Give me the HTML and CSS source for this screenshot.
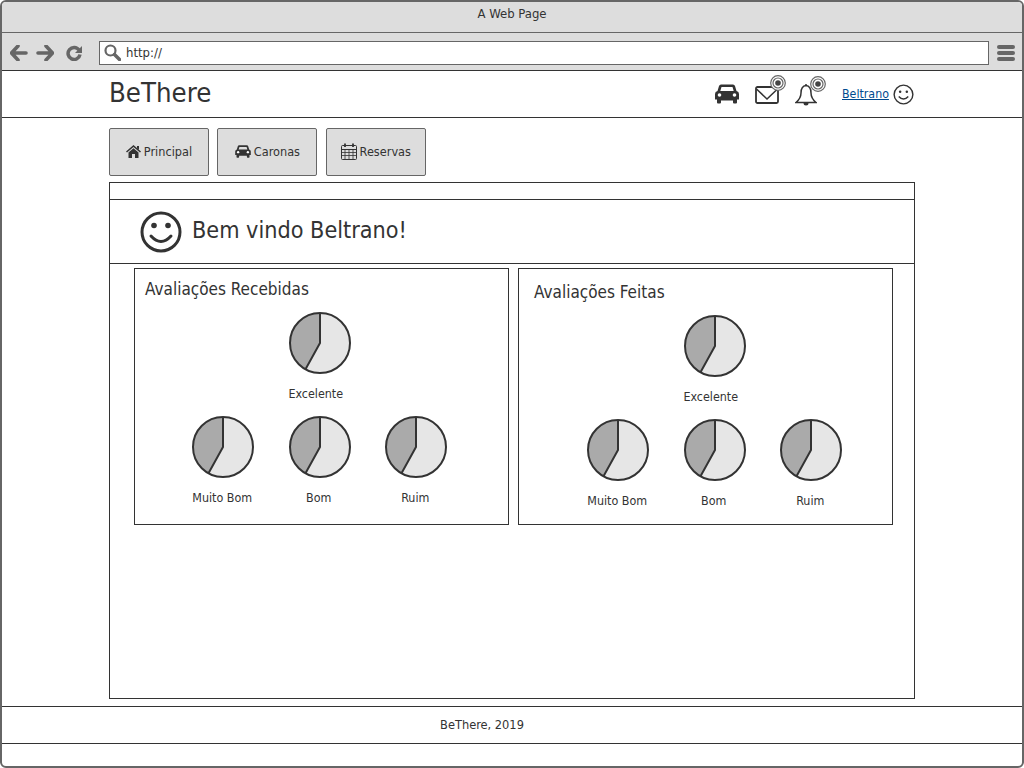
FILE: index.html
```html
<!DOCTYPE html>
<html lang="en">
<head>
    <meta charset="UTF-8">
    <title>BeThere</title>
    <link rel="stylesheet" href="styles.css">
</head>
<body>
    <svg class="defs" width="0" height="0">
        <symbol id="pie" viewBox="0 0 64 64">
            <circle cx="32" cy="32" r="30" fill="#e6e6e6"/>
            <path d="M32 2 V32 L17.500 58.200 A30 30 0 0 1 32 2 Z" fill="#aaa"/>
            <circle cx="32" cy="32" r="30" fill="none" stroke="#333" stroke-width="2"/>
            <path d="M32 2 V32 L17.500 58.200" fill="none" stroke="#333" stroke-width="2"/>
        </symbol>
        <symbol id="car" viewBox="0 0 24 20">
            <path d="M6 0.500 H18 Q19.500 0.500 20 2 L21.500 7 Q24 7.500 24 10 V15.500 H22 V18.500 Q22 19.500 21 19.500 H19 Q18 19.500 18 18.500 V16.500 H6 V18.500 Q6 19.500 5 19.500 H3 Q2 19.500 2 18.500 V15.500 H0 V10 Q0 7.500 2.500 7 L4 2 Q4.500 0.500 6 0.500 Z M6.500 3 L5.300 7 H18.700 L17.500 3 Z" fill="#333" fill-rule="evenodd"/>
            <circle cx="4.500" cy="11" r="1.800" fill="#fff"/>
            <circle cx="19.500" cy="11" r="1.800" fill="#fff"/>
        </symbol>
        <symbol id="signal" viewBox="0 0 16 16">
            <circle cx="8" cy="8" r="7.300" fill="#fff" stroke="#666" stroke-width="1.200"/>
            <circle cx="8" cy="8" r="5" fill="none" stroke="#666" stroke-width="1.200"/>
            <circle cx="8" cy="8" r="2.800" fill="#444"/>
        </symbol>
    </svg>

    <div class="window">
        <div class="titlebar">A Web Page</div>
        <div class="toolbar">
            <svg class="tool-icon" width="18" height="16" viewBox="0 0 18 16"><path d="M8 1 L1.500 8 L8 15 M2.500 8 H16" fill="none" stroke="#666" stroke-width="3.600" stroke-linejoin="round" stroke-linecap="round"/></svg>
            <svg class="tool-icon" width="18" height="16" viewBox="0 0 18 16"><path d="M10 1 L16.500 8 L10 15 M15.500 8 H2" fill="none" stroke="#666" stroke-width="3.600" stroke-linejoin="round" stroke-linecap="round"/></svg>
            <svg class="tool-icon reload" width="16" height="16" viewBox="0 0 16 16"><path d="M13 5 A6 6 0 1 0 14 9.500" fill="none" stroke="#666" stroke-width="3.500"/><path d="M16 1 V8 H9 Z" fill="#666"/></svg>
            <div class="address">
                <svg width="17" height="17" viewBox="0 0 17 17"><circle cx="6.500" cy="6.500" r="5" fill="none" stroke="#666" stroke-width="2.200"/><path d="M10.500 10.500 L15.500 15.500" stroke="#666" stroke-width="3.500" stroke-linecap="round"/></svg>
                <span>http://</span>
            </div>
            <div class="menu-icon"><i></i><i></i><i></i></div>
        </div>

        <header class="site-header">
            <div class="brand">BeThere</div>
            <div class="header-icons">
                <svg class="icon-car" width="24" height="20"><use href="#car"/></svg>
                <div class="notify notify-mail">
                    <svg width="24" height="18" viewBox="0 0 24 18"><rect x="1" y="1" width="22" height="16" rx="1.500" fill="#fff" stroke="#333" stroke-width="1.800"/><path d="M1.500 3 L12 13 L22.500 3" fill="none" stroke="#333" stroke-width="1.500"/></svg>
                    <svg class="signal" width="16" height="16"><use href="#signal"/></svg>
                </div>
                <div class="notify notify-bell">
                    <svg width="22" height="23" viewBox="0 0 22 23"><path d="M11 2.500 C6.500 3 6 6.500 6 10 C6 14 4.500 16.500 1 19.500 H21 C17.500 16.500 16 14 16 10 C16 6.500 15.500 3 11 2.500 Z" fill="#fff" stroke="#333" stroke-width="1.500"/><circle cx="11" cy="2" r="1" fill="#333"/><path d="M8.500 20 A2.500 2.500 0 0 0 13.500 20 Z" fill="#333"/></svg>
                    <svg class="signal" width="16" height="16"><use href="#signal"/></svg>
                </div>
            </div>
            <a class="user-link" href="#">Beltrano</a>
            <svg class="smile-small" width="21" height="21" viewBox="0 0 22 22"><circle cx="11" cy="11" r="9.800" fill="none" stroke="#333" stroke-width="1.500"/><circle cx="7.500" cy="8" r="1.300" fill="#333"/><circle cx="14.500" cy="8" r="1.300" fill="#333"/><path d="M6 13 Q11 18.500 16 13" fill="none" stroke="#333" stroke-width="1.500"/></svg>
        </header>

        <main class="page">
            <nav class="tabs">
                <a class="tab" href="#">
                    <svg width="15" height="13" viewBox="0 0 15 13"><path d="M7.500 0 L15 6.500 L14 7.500 L7.500 2 L1 7.500 L0 6.500 Z M11 1 H13 V4.500 L11 3 Z M2.500 7.500 L7.500 3.200 L12.500 7.500 V13 H9 V9 H6 V13 H2.500 Z" fill="#333"/></svg>
                    Principal
                </a>
                <a class="tab" href="#">
                    <svg width="16" height="13"><use href="#car"/></svg>
                    Caronas
                </a>
                <a class="tab" href="#">
                    <svg width="16" height="17" viewBox="0 0 16 17"><rect x="0.500" y="2.500" width="15" height="14" rx="1" fill="none" stroke="#333" stroke-width="1"/><path d="M4 0.500 V4 M12 0.500 V4" stroke="#333" stroke-width="1.800"/><path d="M1 6.500 H15" stroke="#333" stroke-width="1.200"/><path d="M1 9.500 H15 M1 12.500 H15 M4 6 V16 M8 6 V16 M12 6 V16" stroke="#333" stroke-width="0.800"/></svg>
                    Reservas
                </a>
            </nav>

            <section class="content">
                <div class="content-top"></div>
                <div class="welcome">
                    <svg width="42" height="42" viewBox="0 0 42 42"><circle cx="21" cy="21" r="19" fill="none" stroke="#333" stroke-width="3"/><circle cx="14" cy="14.500" r="2.800" fill="#333"/><circle cx="28" cy="14.500" r="2.800" fill="#333"/><path d="M11 25 Q21 36 31 25" fill="none" stroke="#333" stroke-width="3" stroke-linecap="round"/></svg>
                    <h1>Bem vindo Beltrano!</h1>
                </div>
                <div class="panels">
                    <div class="panel panel-left">
                        <h2>Avaliações Recebidas</h2>
                        <div class="pies">
                            <figure class="pie pie-top"><svg width="64" height="64"><use href="#pie"/></svg><figcaption class="shift">Excelente</figcaption></figure>
                            <figure class="pie"><svg width="64" height="64"><use href="#pie"/></svg><figcaption>Muito Bom</figcaption></figure>
                            <figure class="pie"><svg width="64" height="64"><use href="#pie"/></svg><figcaption>Bom</figcaption></figure>
                            <figure class="pie"><svg width="64" height="64"><use href="#pie"/></svg><figcaption>Ruim</figcaption></figure>
                        </div>
                    </div>
                    <div class="panel panel-right">
                        <h2>Avaliações Feitas</h2>
                        <div class="pies">
                            <figure class="pie pie-top"><svg width="64" height="64"><use href="#pie"/></svg><figcaption class="shift">Excelente</figcaption></figure>
                            <figure class="pie"><svg width="64" height="64"><use href="#pie"/></svg><figcaption>Muito Bom</figcaption></figure>
                            <figure class="pie"><svg width="64" height="64"><use href="#pie"/></svg><figcaption>Bom</figcaption></figure>
                            <figure class="pie"><svg width="64" height="64"><use href="#pie"/></svg><figcaption>Ruim</figcaption></figure>
                        </div>
                    </div>
                </div>
            </section>
        </main>

        <footer class="site-footer">BeThere, 2019</footer>
    </div>
</body>
</html>
```

FILE: styles.css
```css
html,
body {
    margin: 0;
    padding: 0;
}

body {
    font-family: "DejaVu Sans", sans-serif;
    font-stretch: condensed;
    color: #333;
    background-color: #fff;
}

.defs {
    position: absolute;
}

svg {
    display: block;
}

.window {
    box-sizing: border-box;
    width: 1024px;
    height: 768px;
    border: 2px solid #666;
    border-radius: 6px;
    overflow: hidden;
}

.titlebar {
    height: 30px;
    background-color: #ddd;
    border-bottom: 1px solid #666;
    text-align: center;
    font-size: 13px;
    line-height: 24px;
}

.toolbar {
    box-sizing: border-box;
    display: flex;
    align-items: center;
    height: 37px;
    padding: 2px 0 0 8px;
    background-color: #ddd;
}

.tool-icon {
    margin-right: 8px;
}

.tool-icon.reload {
    margin-left: 4px;
    margin-right: 17px;
}

.address {
    box-sizing: border-box;
    display: flex;
    align-items: center;
    gap: 5px;
    width: 890px;
    height: 24px;
    padding-left: 4px;
    border: 1px solid #666;
    background-color: #fff;
    font-size: 13px;
}

.menu-icon {
    display: flex;
    flex-direction: column;
    gap: 2px;
    margin-left: 8px;
}

.menu-icon i {
    display: block;
    width: 18px;
    height: 4px;
    border-radius: 2px;
    background-color: #666;
}

.site-header {
    display: flex;
    align-items: center;
    height: 46px;
    margin: 0 -2px;
    padding-left: 109px;
    border-top: 1px solid #333;
    border-bottom: 1px solid #333;
    background-color: #fff;
}

.brand {
    width: 606px;
    font-size: 27.3px;
    line-height: 40px;
    margin-bottom: 3px;
}

.header-icons {
    display: flex;
    align-items: center;
    gap: 16px;
    width: 127px;
}

.notify {
    position: relative;
}

.notify-mail {
    margin-top: 1px;
}

.signal {
    position: absolute;
    top: -11px;
    right: -7px;
}

.notify-bell .signal {
    top: -7px;
    right: -9px;
}

.user-link {
    color: #004a8f;
    font-size: 12.3px;
    margin-right: 4px;
}

.page {
    box-sizing: border-box;
    height: 588px;
    padding: 10px 0 0 107px;
}

.tabs {
    display: flex;
    gap: 8.4px;
}

.tab {
    box-sizing: border-box;
    display: flex;
    align-items: center;
    justify-content: center;
    gap: 3px;
    width: 100px;
    height: 48px;
    padding-bottom: 2px;
    border: 1px solid #666;
    border-radius: 2px;
    background-color: #ddd;
    color: #333;
    font-size: 12.6px;
    text-decoration: none;
}

.content {
    box-sizing: border-box;
    width: 806px;
    height: 517px;
    margin-top: 6px;
    border: 1px solid #333;
}

.content-top {
    height: 16px;
    border-bottom: 1px solid #333;
}

.welcome {
    display: flex;
    align-items: center;
    gap: 10px;
    height: 63px;
    padding-left: 30px;
    border-bottom: 1px solid #333;
}

.welcome h1 {
    margin: 0 0 4px;
    font-size: 23.2px;
    font-weight: 400;
}

.panels {
    display: flex;
    gap: 9px;
    padding: 4px 0 0 24px;
}

.panel {
    box-sizing: border-box;
    width: 375px;
    height: 257px;
    border: 1px solid #333;
}

.panel h2 {
    margin: 0;
    height: 32px;
    font-size: 17px;
    font-weight: 400;
}

.panel-left h2 {
    padding: 10px 0 0 10px;
}

.panel-right h2 {
    padding: 13px 0 0 15px;
}

.pies {
    display: grid;
    grid-template-columns: repeat(3, 96.5px);
    justify-content: start;
    row-gap: 11px;
}

.panel-left .pies {
    margin-left: 40px;
}

.panel-right .pies {
    margin-left: 51px;
}

.pie {
    margin: 0;
    display: flex;
    flex-direction: column;
    align-items: center;
    height: 93px;
}

.pie-top {
    grid-column: 1 / 4;
    width: 96.5px;
    margin-left: 96.5px;
}

.pie figcaption {
    margin: 10px 2px 0 0;
    font-size: 12.4px;
    line-height: 17px;
}

.pie figcaption.shift {
    margin-right: 8px;
}

.site-footer {
    box-sizing: border-box;
    height: 38px;
    margin: 0 -2px;
    border-top: 1px solid #333;
    border-bottom: 1px solid #333;
    background-color: #fff;
    text-align: center;
    font-size: 12.7px;
    line-height: 36px;
    padding-right: 60px;
}
```
